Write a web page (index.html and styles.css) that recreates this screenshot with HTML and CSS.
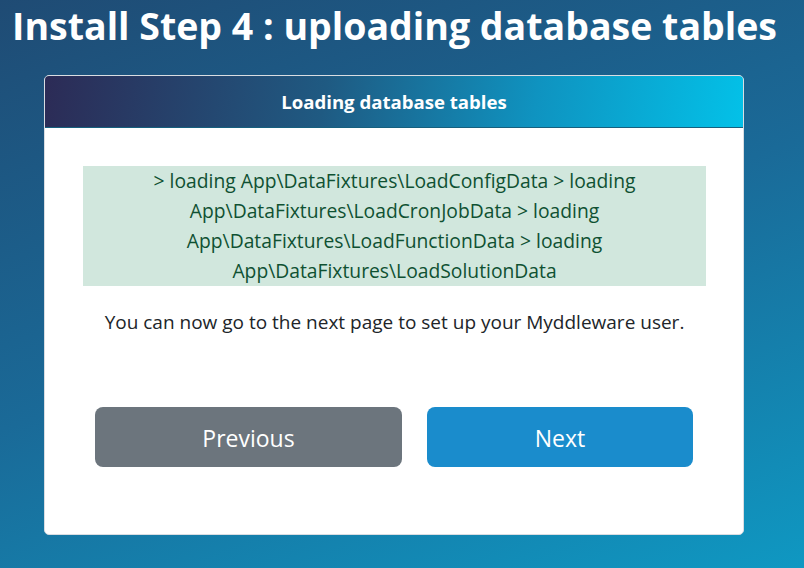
FILE: index.html
```html
<!DOCTYPE html>
<html lang="en">
<head>
<meta charset="utf-8">
<title>Install Step 4</title>
<link rel="stylesheet" href="styles.css">
</head>
<body>
<div class="page">
  <h1 class="title">Install Step 4 : uploading database tables</h1>
  <div class="card">
    <div class="card-header">Loading database tables</div>
    <div class="card-body">
      <div class="alert">&gt; loading App\DataFixtures\LoadConfigData &gt; loading App\DataFixtures\LoadCronJobData &gt; loading App\DataFixtures\LoadFunctionData &gt; loading App\DataFixtures\LoadSolutionData</div>
      <p class="note">You can now go to the next page to set up your Myddleware user.</p>
      <div class="actions">
        <a class="btn btn-prev" href="#">Previous</a>
        <a class="btn btn-next" href="#">Next</a>
      </div>
    </div>
  </div>
</div>
</body>
</html>
```
FILE: styles.css
```css
* { box-sizing: border-box; }
html, body { margin: 0; height: 100%; }
body {
  font-family: "Open Sans", "Noto Sans", sans-serif;
  background: linear-gradient(160deg, #1f4b74 0%, #1a6a98 50%, #0f98c2 100%);
  color: #212529;
  overflow: hidden;
}
.page {
  padding: 0 0 0 12px;
}
.title {
  margin: 0;
  font-size: 37.5px;
  line-height: 52px;
  font-weight: 700;
  color: #fff;
  white-space: nowrap;
}
.card {
  margin: 23px 0 0 32px;
  width: 700px;
  height: 460px;
  background: #fff;
  border: 1px solid #d9dde2;
  border-radius: 5px;
  overflow: hidden;
}
.card-header {
  height: 52px;
  display: flex;
  align-items: center;
  justify-content: center;
  color: #fff;
  font-weight: 700;
  font-size: 18.6px;
  background: linear-gradient(100deg, #2c2b56 0%, #1f5a82 40%, #0f93c0 70%, #03c1e8 100%);
  border-bottom: 1px solid #16607e;
}
.card-body {
  padding: 38px 37px 0 38px;
}
.alert {
  background: #d1e7dd;
  color: #0f5132;
  text-align: center;
  font-size: 19.3px;
  line-height: 30px;
  padding: 0 10px;
  height: 120px;
}
.note {
  margin: 21px 0 0;
  text-align: center;
  font-size: 19px;
  line-height: 30px;
  color: #212529;
}
.actions {
  display: flex;
  margin-top: 70px;
  padding-left: 12px;
  gap: 25px;
}
.btn {
  display: flex;
  align-items: center;
  justify-content: center;
  height: 60px;
  padding-top: 2px;
  border-radius: 8px;
  color: #fff;
  font-size: 23px;
  text-decoration: none;
}
.btn-prev { width: 307px; background: #6c757d; }
.btn-next { width: 266px; background: #1a8ccc; }
```
